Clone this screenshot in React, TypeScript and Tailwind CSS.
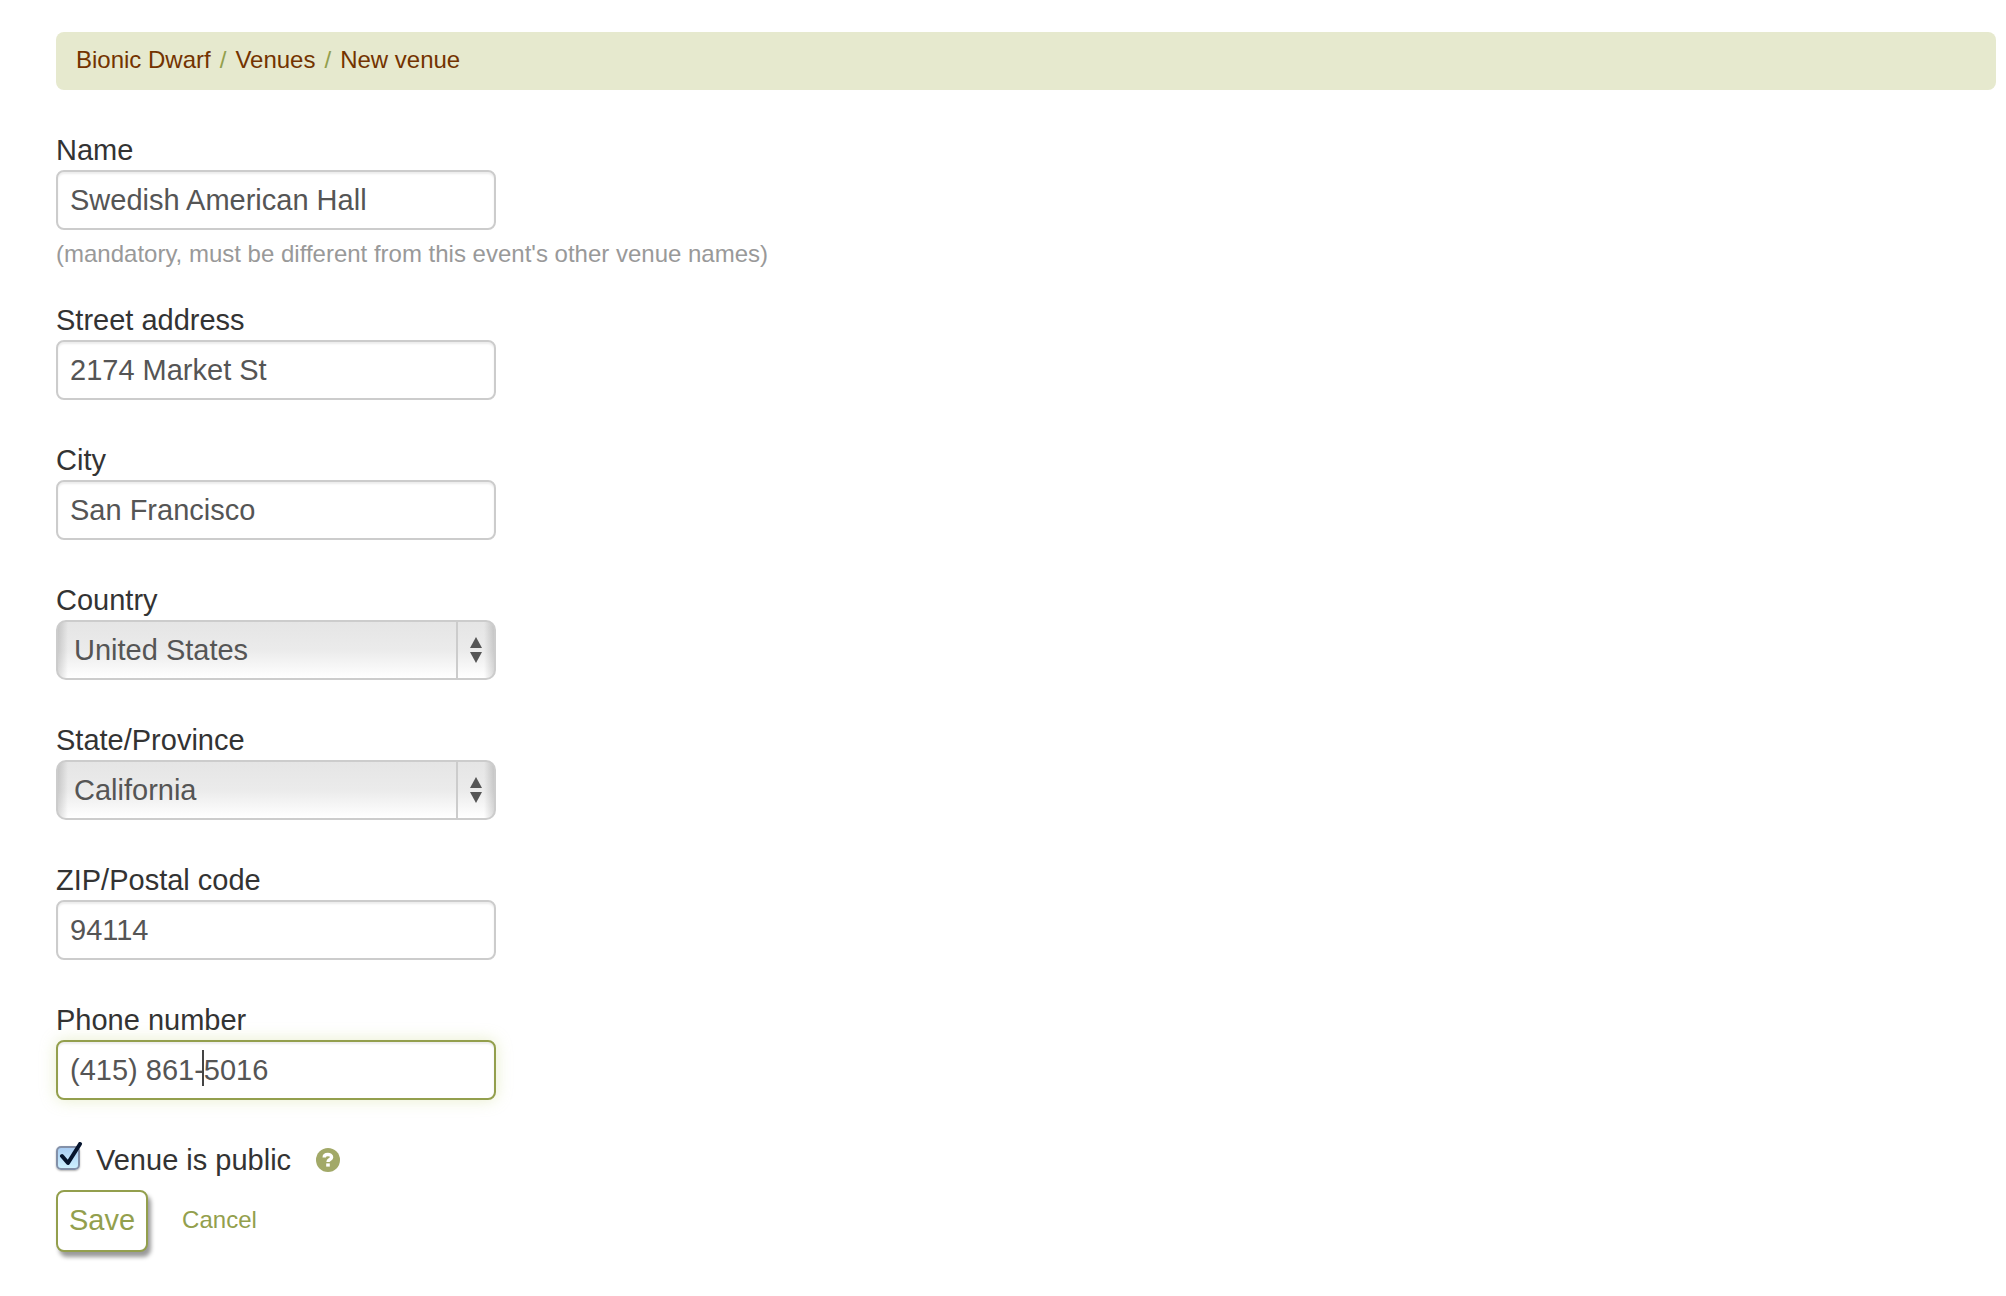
import { useState } from "react";

const inputClass =
  "block w-full h-[60px] px-3 border-2 rounded-lg bg-white text-[29px] text-[#555] outline-none";

function TextField({
  id,
  label,
  value,
  hint,
  caret,
}: {
  id: string;
  label: string;
  value: string;
  hint?: string;
  caret?: boolean;
}) {
  const [text, setText] = useState(value);

  return (
    <div className={hint ? "mb-[26px]" : "mb-10"}>
      <label htmlFor={id} className="block text-[29px] leading-10">
        {label}
      </label>
      <div className="relative w-full max-w-[440px]">
        <input
          id={id}
          type="text"
          value={text}
          onChange={(e) => setText(e.target.value)}
          className={`${inputClass} ${
            caret
              ? "border-[#939f4d] shadow-[inset_0_2px_2px_rgba(0,0,0,0.075),0_0_16px_rgba(190,205,110,0.35)]"
              : "border-[#ccc] shadow-[inset_0_2px_2px_rgba(0,0,0,0.075)]"
          }`}
        />
        {/* text cursor */}
        {caret && (
          <span className="absolute left-[146px] top-[10px] w-[2px] h-9 bg-[#444]" />
        )}
      </div>
      {hint && (
        <p className="mt-1 text-[24px] leading-10 text-[#999]">{hint}</p>
      )}
    </div>
  );
}

function SelectField({
  id,
  label,
  options,
}: {
  id: string;
  label: string;
  options: string[];
}) {
  return (
    <div className="mb-10">
      <label htmlFor={id} className="block text-[29px] leading-10">
        {label}
      </label>
      <div className="relative w-full max-w-[440px]">
        <select
          id={id}
          className="block w-full h-[60px] pt-[2px] pl-4 pr-12 appearance-none border-2 border-[#ccc] rounded-[10px] text-[29px] text-[#555] outline-none bg-[linear-gradient(to_right,rgba(0,0,0,0.14),rgba(0,0,0,0)_10px,rgba(0,0,0,0)_calc(100%-10px),rgba(0,0,0,0.14)),linear-gradient(to_bottom,#e5e5e5,#ebebeb_50%,#fff)]"
        >
          {options.map((option) => (
            <option key={option}>{option}</option>
          ))}
        </select>
        {/* arrows */}
        <span className="absolute right-0 top-[2px] bottom-[2px] w-10 pr-[2px] border-l-2 border-[#ccc] pointer-events-none flex items-center justify-center">
          <svg width="12" height="26" viewBox="0 0 12 26" fill="#555">
            <path d="M6 0 12 11H0Z" />
            <path d="M0 15H12L6 26Z" />
          </svg>
        </span>
      </div>
    </div>
  );
}

export default function App() {
  const [isPublic, setIsPublic] = useState(true);

  return (
    <main className="min-h-screen bg-white pt-8 pl-14 pr-[10px] font-['Liberation_Sans',sans-serif] text-[#333]">
      <nav className="flex gap-[9px] px-5 pb-[2px] rounded-lg bg-[#e6e9ce] text-[24px] leading-14 text-[#939f4d]">
        <a href="#event" className="text-[#733300]">
          Bionic Dwarf
        </a>
        <span>/</span>
        <a href="#venues" className="text-[#733300]">
          Venues
        </a>
        <span>/</span>
        <a href="#new" className="text-[#733300]">
          New venue
        </a>
      </nav>

      <form className="mt-10" onSubmit={(e) => e.preventDefault()}>
        <TextField
          id="name"
          label="Name"
          value="Swedish American Hall"
          hint="(mandatory, must be different from this event's other venue names)"
        />
        <TextField id="street" label="Street address" value="2174 Market St" />
        <TextField id="city" label="City" value="San Francisco" />
        <SelectField
          id="country"
          label="Country"
          options={["United States"]}
        />
        <SelectField
          id="state"
          label="State/Province"
          options={["California"]}
        />
        <TextField id="zip" label="ZIP/Postal code" value="94114" />
        <TextField id="phone" label="Phone number" value="(415) 861-5016" caret />

        <div className="flex items-center h-10">
          <span className="relative block w-6 h-6 mr-4 mb-1">
            <input
              id="public"
              type="checkbox"
              checked={isPublic}
              onChange={(e) => setIsPublic(e.target.checked)}
              className="block w-6 h-6 appearance-none rounded-[5px] border-2 border-[#8390a8] bg-linear-to-b from-[#a9cdf3] to-[#cdf0ff] shadow-[0_1px_2px_rgba(0,0,0,0.3)]"
            />
            {isPublic && (
              <svg
                viewBox="0 0 28 28"
                className="absolute left-0 -top-1 w-7 h-7 pointer-events-none"
                fill="none"
                stroke="#06152e"
                strokeWidth="4"
                strokeLinecap="round"
                strokeLinejoin="round"
              >
                <path d="M6 14 12 21 24 2" />
              </svg>
            )}
          </span>
          <label htmlFor="public" className="text-[29px] leading-10">
            Venue is public
          </label>
          <button type="button" aria-label="Help" className="ml-[25px]">
            <svg width="24" height="24" viewBox="0 0 24 24">
              <circle cx="12" cy="12" r="12" fill="#a2a968" />
              <path
                d="M8.2 9.4C8.2 5.6 15.6 5.6 15.6 9.2 15.6 11.6 12 11.4 12 14"
                fill="none"
                stroke="#fff"
                strokeWidth="3.4"
              />
              <rect x="10.2" y="15.4" width="3.6" height="3.2" fill="#fff" />
            </svg>
          </button>
        </div>

        <div className="mt-[10px] flex items-center">
          <button
            type="submit"
            className="h-[62px] px-[11px] border-2 border-[#939f4d] rounded-lg bg-white text-[29px] text-[#939f4d] shadow-[3px_5px_4px_rgba(0,0,0,0.4)]"
          >
            Save
          </button>
          <a
            href="#cancel"
            className="ml-[34px] pb-[2px] text-[24px] text-[#939f4d]"
          >
            Cancel
          </a>
        </div>
      </form>
    </main>
  );
}
